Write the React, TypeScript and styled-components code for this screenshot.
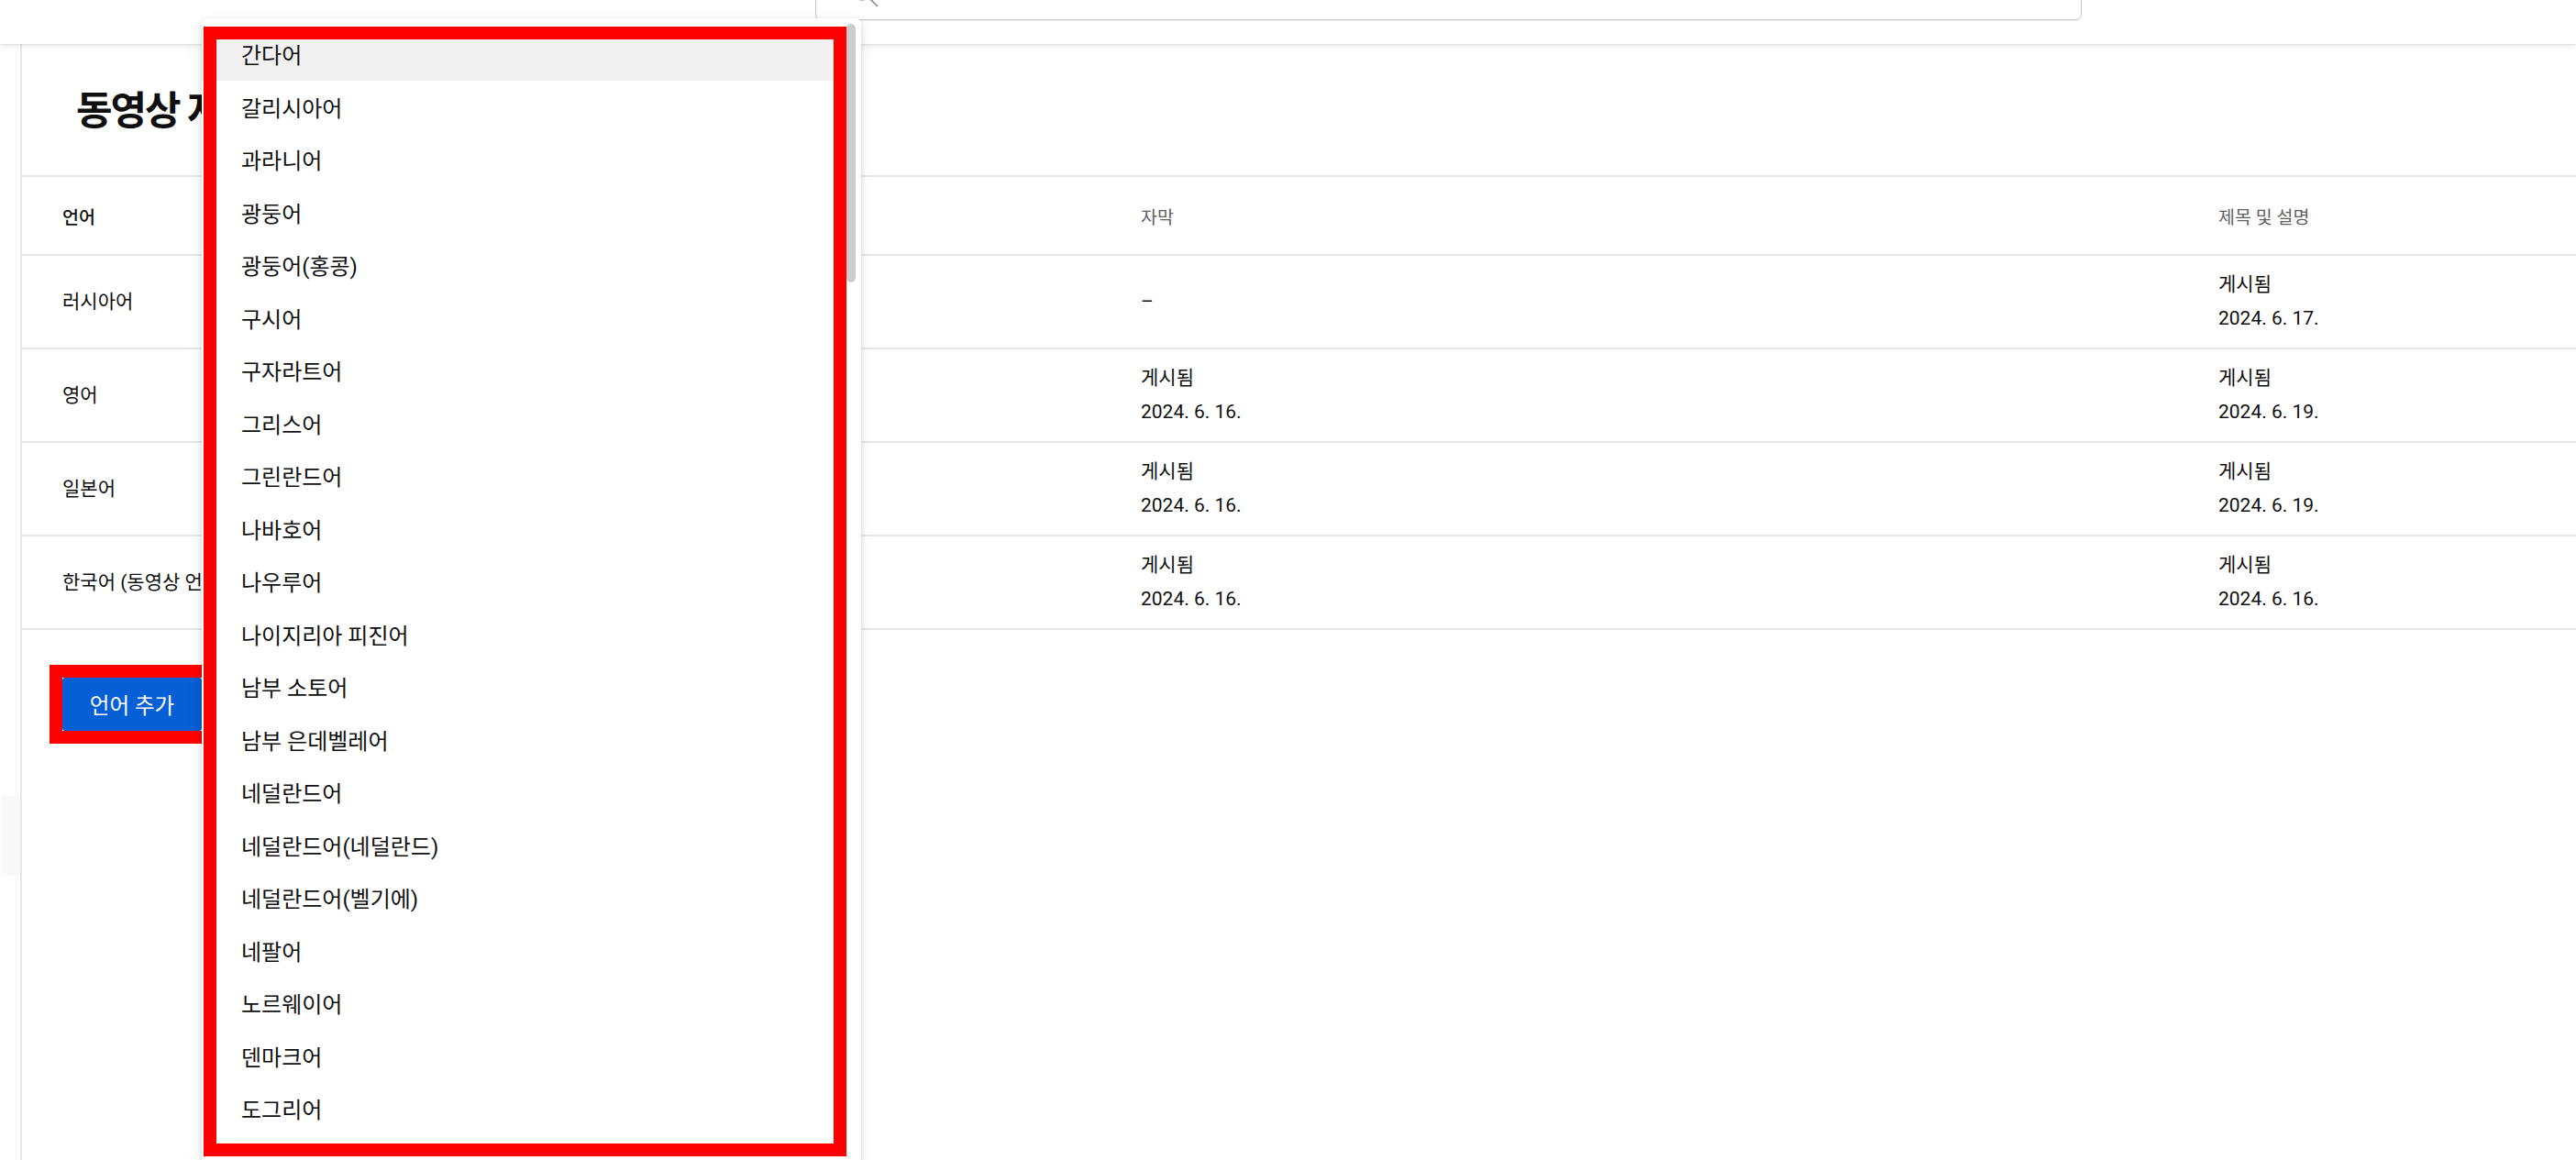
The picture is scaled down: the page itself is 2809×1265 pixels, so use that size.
import React from "react";
import styled, { createGlobalStyle } from "styled-components";

const GlobalStyle = createGlobalStyle`
  html, body {
    margin: 0;
    padding: 0;
    background: #ffffff;
    overflow: hidden;
  }
  body {
    font-family: Roboto, "Noto Sans CJK KR", "Noto Sans", sans-serif;
    color: #0f0f0f;
  }
  * { box-sizing: border-box; }
`;

const Page = styled.div`
  position: relative;
  width: 2809px;
  height: 1265px;
  overflow: hidden;
  background: #ffffff;
`;

const TopBar = styled.header`
  position: relative;
  z-index: 2;
  height: 48px;
  background: #ffffff;
  display: flex;
  align-items: flex-start;
  padding-left: 889px;
  box-shadow: 0 1px 2px rgba(0, 0, 0, 0.1), 0 4px 8px rgba(0, 0, 0, 0.05);
`;

const SearchBox = styled.div`
  width: 1381px;
  height: 60px;
  margin-top: -38px;
  border: 1px solid #c9c9c9;
  border-radius: 6px;
  box-shadow: 0 1px 1px rgba(0, 0, 0, 0.08);
  display: flex;
  align-items: flex-start;
  padding: 11.5px 0 0 34.5px;
  color: #8a8a8a;
`;

const Body = styled.div`
  display: flex;
  height: 1217px;
`;

const Rail = styled.nav`
  width: 22px;
  flex: none;
`;

const RailItem = styled.div`
  margin: 820px 0 0 1px;
  height: 87px;
  background: #f8f8f8;
`;

const Card = styled.main`
  flex: 1;
  border-left: 2px solid #e8e8e8;
`;

const Title = styled.h1`
  margin: 0;
  height: 143px;
  display: flex;
  align-items: center;
  padding: 0 0 6px 59px;
  font-size: 43px;
  font-weight: 700;
  letter-spacing: -2px;
  color: #0f0f0f;
`;

const Table = styled.div`
  border-top: 2px solid #e8e8e8;
`;

const Row = styled.div<{ $h: number }>`
  display: grid;
  grid-template-columns: 600px 576px 1175px 1fr;
  align-items: center;
  height: ${(p) => p.$h}px;
  padding-left: 44px;
  border-bottom: 2px solid #e8e8e8;
`;

const HeadCell = styled.div<{ $strong?: boolean }>`
  font-size: 19.5px;
  font-weight: ${(p) => (p.$strong ? 500 : 400)};
  color: ${(p) => (p.$strong ? "#0f0f0f" : "#606060")};
`;

const Cell = styled.div`
  font-size: 21px;
  line-height: 37px;
  color: #0f0f0f;
  white-space: nowrap;
`;

const Actions = styled.div`
  padding: 52px 0 0 44px;
`;

const Marked = styled.span`
  display: inline-flex;
  outline: 14px solid #ff0000;
  outline-offset: 0;
`;

const AddButton = styled.button`
  width: 152px;
  height: 58px;
  border: none;
  border-radius: 3px;
  background: #065fd4;
  color: #ffffff;
  font-family: Roboto, "Noto Sans CJK KR", sans-serif;
  font-size: 23.5px;
  font-weight: 400;
  padding: 0;
`;

const Menu = styled.div`
  position: absolute;
  z-index: 5;
  left: 220px;
  top: 20px;
  width: 719px;
  height: 1262px;
  background: #ffffff;
  border-radius: 6px;
  box-shadow: 0 2px 6px rgba(0, 0, 0, 0.14), 0 6px 20px rgba(0, 0, 0, 0.06);
  overflow: hidden;
`;

const MenuList = styled.ul`
  list-style: none;
  margin: 0;
  padding: 10px 16px 0 0;
`;

const MenuItem = styled.li<{ $active?: boolean }>`
  height: 57.5px;
  display: flex;
  align-items: center;
  padding-left: 43px;
  font-size: 24px;
  color: #0f0f0f;
  background: ${(p) => (p.$active ? "#f0f0f0" : "transparent")};
`;

const ScrollThumb = styled.div`
  position: absolute;
  right: 6px;
  top: 6px;
  width: 10px;
  height: 282px;
  border-radius: 5px;
  background: #cccccc;
`;

const Annotation = styled.div`
  position: absolute;
  left: 2px;
  top: 9px;
  width: 701px;
  height: 1232px;
  border: 14px solid #ff0000;
  pointer-events: none;
`;

const languages = [
  "간다어",
  "갈리시아어",
  "과라니어",
  "광둥어",
  "광둥어(홍콩)",
  "구시어",
  "구자라트어",
  "그리스어",
  "그린란드어",
  "나바호어",
  "나우루어",
  "나이지리아 피진어",
  "남부 소토어",
  "남부 은데벨레어",
  "네덜란드어",
  "네덜란드어(네덜란드)",
  "네덜란드어(벨기에)",
  "네팔어",
  "노르웨이어",
  "덴마크어",
  "도그리어",
];

type Status = { label: string; date: string } | null;

const rows: { lang: string; modified: string; subs: Status; meta: Status }[] = [
  { lang: "러시아어", modified: "2024. 6. 17.", subs: null, meta: { label: "게시됨", date: "2024. 6. 17." } },
  { lang: "영어", modified: "2024. 6. 19.", subs: { label: "게시됨", date: "2024. 6. 16." }, meta: { label: "게시됨", date: "2024. 6. 19." } },
  { lang: "일본어", modified: "2024. 6. 19.", subs: { label: "게시됨", date: "2024. 6. 16." }, meta: { label: "게시됨", date: "2024. 6. 19." } },
  { lang: "한국어 (동영상 언어)", modified: "2024. 6. 16.", subs: { label: "게시됨", date: "2024. 6. 16." }, meta: { label: "게시됨", date: "2024. 6. 16." } },
];

const StatusCell = ({ s }: { s: Status }) =>
  s ? (
    <Cell>
      {s.label}
      <br />
      {s.date}
    </Cell>
  ) : (
    <Cell>–</Cell>
  );

export default function App() {
  return (
    <Page>
      <GlobalStyle />
      <TopBar>
        <SearchBox>
          <svg width="36" height="36" viewBox="0 0 24 24" fill="none" stroke="currentColor" strokeWidth="1.1" strokeLinecap="round">
            <circle cx="10" cy="10" r="6.5" />
            <path d="M15 15l6 6" />
          </svg>
        </SearchBox>
      </TopBar>
      <Body>
        <Rail>
          <RailItem />
        </Rail>
        <Card>
          <Title>동영상 자막</Title>
          <Table>
            <Row $h={86}>
              <HeadCell $strong>언어</HeadCell>
              <HeadCell>수정 날짜</HeadCell>
              <HeadCell>자막</HeadCell>
              <HeadCell>제목 및 설명</HeadCell>
            </Row>
            {rows.map((r) => (
              <Row $h={102} key={r.lang}>
                <Cell>{r.lang}</Cell>
                <Cell>{r.modified}</Cell>
                <StatusCell s={r.subs} />
                <StatusCell s={r.meta} />
              </Row>
            ))}
          </Table>
          <Actions>
            <Marked>
              <AddButton>언어 추가</AddButton>
            </Marked>
          </Actions>
        </Card>
      </Body>
      <Menu>
        <MenuList>
          {languages.map((l, i) => (
            <MenuItem key={l} $active={i === 0}>
              {l}
            </MenuItem>
          ))}
        </MenuList>
        <ScrollThumb />
        <Annotation />
      </Menu>
    </Page>
  );
}
